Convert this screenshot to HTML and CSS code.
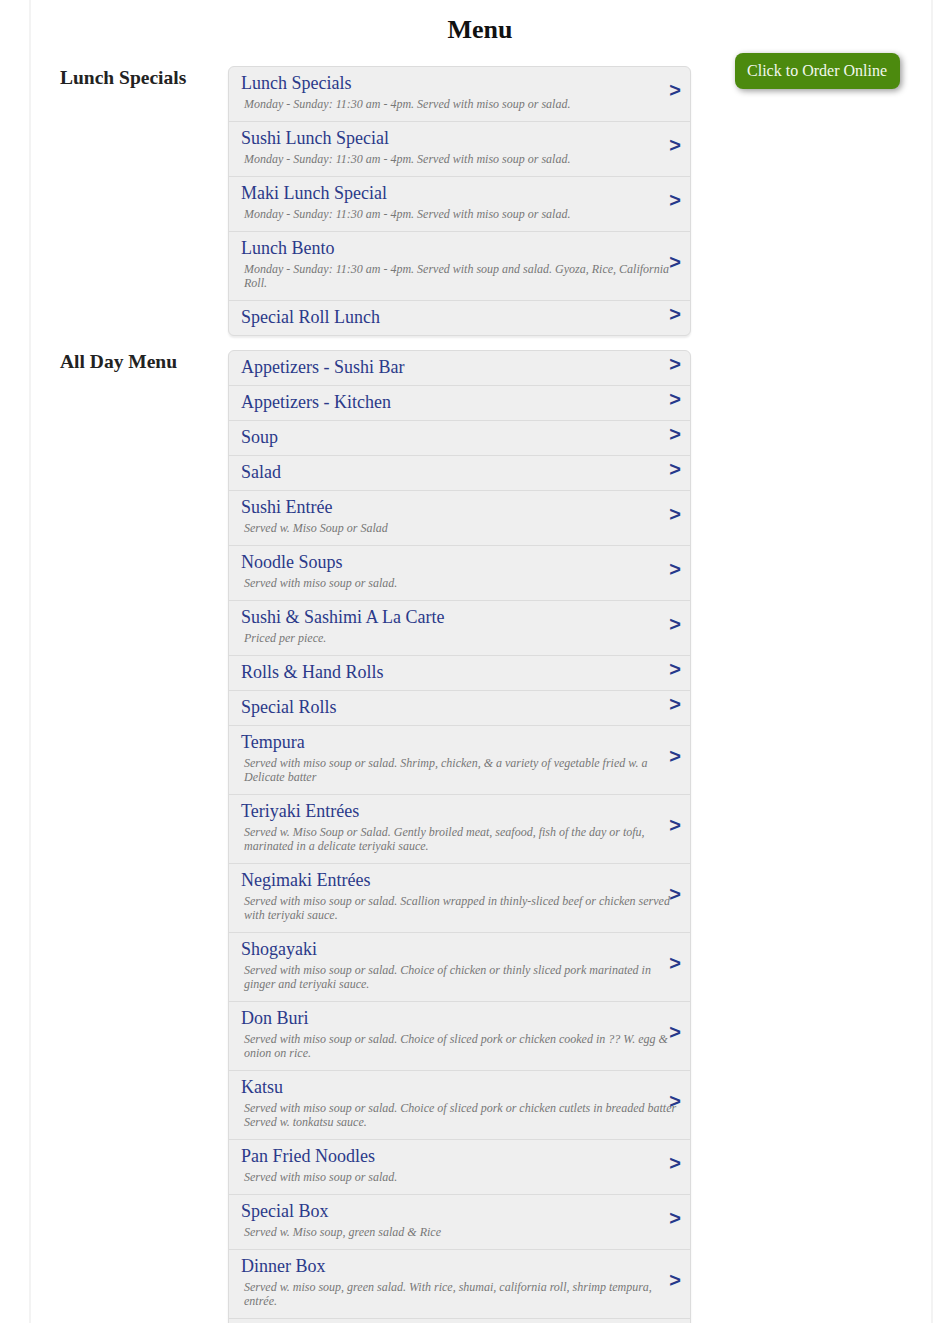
FILE: index.html
```html
<!DOCTYPE html>
<html>
<head>
<meta charset="utf-8">
<title>Menu</title>
<link rel="stylesheet" href="styles.css">
</head>
<body>
<div class="page">
  <h1 class="title">Menu</h1>
  <div class="sections">
    <h2 class="label">Lunch Specials</h2>
    <ul class="list">
      <li class="row"><div class="name">Lunch Specials</div><div class="desc">Monday - Sunday: 11:30 am - 4pm. Served with miso soup or salad.</div><span class="arrow">&gt;</span></li>
      <li class="row"><div class="name">Sushi Lunch Special</div><div class="desc">Monday - Sunday: 11:30 am - 4pm. Served with miso soup or salad.</div><span class="arrow">&gt;</span></li>
      <li class="row"><div class="name">Maki Lunch Special</div><div class="desc">Monday - Sunday: 11:30 am - 4pm. Served with miso soup or salad.</div><span class="arrow">&gt;</span></li>
      <li class="row"><div class="name">Lunch Bento</div><div class="desc">Monday - Sunday: 11:30 am - 4pm. Served with soup and salad. Gyoza, Rice, California Roll.</div><span class="arrow">&gt;</span></li>
      <li class="row"><div class="name">Special Roll Lunch</div><span class="arrow">&gt;</span></li>
    </ul>
    <div class="side"><a class="order" href="#">Click to Order Online</a></div>

    <h2 class="label">All Day Menu</h2>
    <ul class="list">
      <li class="row"><div class="name">Appetizers - Sushi Bar</div><span class="arrow">&gt;</span></li>
      <li class="row"><div class="name">Appetizers - Kitchen</div><span class="arrow">&gt;</span></li>
      <li class="row"><div class="name">Soup</div><span class="arrow">&gt;</span></li>
      <li class="row"><div class="name">Salad</div><span class="arrow">&gt;</span></li>
      <li class="row"><div class="name">Sushi Entrée</div><div class="desc">Served w. Miso Soup or Salad</div><span class="arrow">&gt;</span></li>
      <li class="row"><div class="name">Noodle Soups</div><div class="desc">Served with miso soup or salad.</div><span class="arrow">&gt;</span></li>
      <li class="row"><div class="name">Sushi &amp; Sashimi A La Carte</div><div class="desc">Priced per piece.</div><span class="arrow">&gt;</span></li>
      <li class="row"><div class="name">Rolls &amp; Hand Rolls</div><span class="arrow">&gt;</span></li>
      <li class="row"><div class="name">Special Rolls</div><span class="arrow">&gt;</span></li>
      <li class="row"><div class="name">Tempura</div><div class="desc">Served with miso soup or salad. Shrimp, chicken, &amp; a variety of vegetable fried w. a Delicate batter</div><span class="arrow">&gt;</span></li>
      <li class="row"><div class="name">Teriyaki Entrées</div><div class="desc">Served w. Miso Soup or Salad. Gently broiled meat, seafood, fish of the day or tofu, marinated in a delicate teriyaki sauce.</div><span class="arrow">&gt;</span></li>
      <li class="row"><div class="name">Negimaki Entrées</div><div class="desc">Served with miso soup or salad. Scallion wrapped in thinly-sliced beef or chicken served with teriyaki sauce.</div><span class="arrow">&gt;</span></li>
      <li class="row"><div class="name">Shogayaki</div><div class="desc">Served with miso soup or salad. Choice of chicken or thinly sliced pork marinated in ginger and teriyaki sauce.</div><span class="arrow">&gt;</span></li>
      <li class="row"><div class="name">Don Buri</div><div class="desc">Served with miso soup or salad. Choice of sliced pork or chicken cooked in ?? W. egg &amp; onion on rice.</div><span class="arrow">&gt;</span></li>
      <li class="row"><div class="name">Katsu</div><div class="desc">Served with miso soup or salad. Choice of sliced pork or chicken cutlets in breaded batter Served w. tonkatsu sauce.</div><span class="arrow">&gt;</span></li>
      <li class="row"><div class="name">Pan Fried Noodles</div><div class="desc">Served with miso soup or salad.</div><span class="arrow">&gt;</span></li>
      <li class="row"><div class="name">Special Box</div><div class="desc">Served w. Miso soup, green salad &amp; Rice</div><span class="arrow">&gt;</span></li>
      <li class="row"><div class="name">Dinner Box</div><div class="desc">Served w. miso soup, green salad. With rice, shumai, california roll, shrimp tempura, entrée.</div><span class="arrow">&gt;</span></li>
      <li class="row"><div class="name">Side Orders</div><span class="arrow">&gt;</span></li>
      <li class="row"><div class="name">Beverages</div><span class="arrow">&gt;</span></li>
    </ul>
    <div class="side"></div>
  </div>
</div>
</body>
</html>
```

FILE: styles.css
```css
html, body {
  margin: 0;
  padding: 0;
  background: #fff;
}
body {
  font-family: "Liberation Serif", "Times New Roman", serif;
  color: #222;
}
.page {
  margin-left: 29px;
  border-left: 2px solid #f3f3f3;
  border-right: 2px solid #f3f3f3;
  padding: 0 31px 40px 29px;
  box-sizing: border-box;
  width: 904px;
  min-height: 1400px;
}
.title {
  margin: 0;
  padding-top: 15px;
  font-size: 26px;
  line-height: 30px;
  text-align: center;
  font-weight: bold;
  color: #111;
}
.sections {
  display: grid;
  grid-template-columns: 168px 463px 1fr;
  row-gap: 14px;
  margin-top: 21px;
  align-items: start;
}
.label {
  margin: 0;
  padding-top: 1px;
  font-size: 19.5px;
  line-height: 22px;
  font-weight: bold;
  color: #222;
}
.list {
  list-style: none;
  margin: 0;
  padding: 0;
  background: #efefef;
  border: 1px solid #dcdcdc;
  border-radius: 6px;
  box-shadow: 0 2px 2px rgba(0, 0, 0, 0.08);
  overflow: hidden;
}
.row {
  position: relative;
  padding: 6px 10px 7px 12px;
  border-top: 1px solid #dcdcdc;
}
.row:first-child {
  border-top: none;
}
.name {
  font-size: 18px;
  line-height: 21px;
  color: #2b3a8a;
}
.desc {
  margin: 3px 0 3px;
  padding-left: 3px;
  font-size: 12px;
  line-height: 14px;
  font-style: italic;
  color: #777;
}
.arrow {
  position: absolute;
  right: 9px;
  top: 50%;
  transform: translateY(-14px);
  font-family: "Liberation Sans", Arial, sans-serif;
  font-weight: bold;
  font-size: 20px;
  line-height: 20px;
  color: #26388a;
}
.side {
  display: flex;
  justify-content: flex-end;
}
.order {
  margin-top: -13px;
  display: inline-block;
  padding: 8px 13px 8px 12px;
  font-size: 16px;
  line-height: 20px;
  color: #f2f8ee;
  text-decoration: none;
  background: #4c8a0e;
  border-radius: 8px;
  box-shadow: 2px 2px 6px rgba(0, 0, 0, 0.4);
}
```
